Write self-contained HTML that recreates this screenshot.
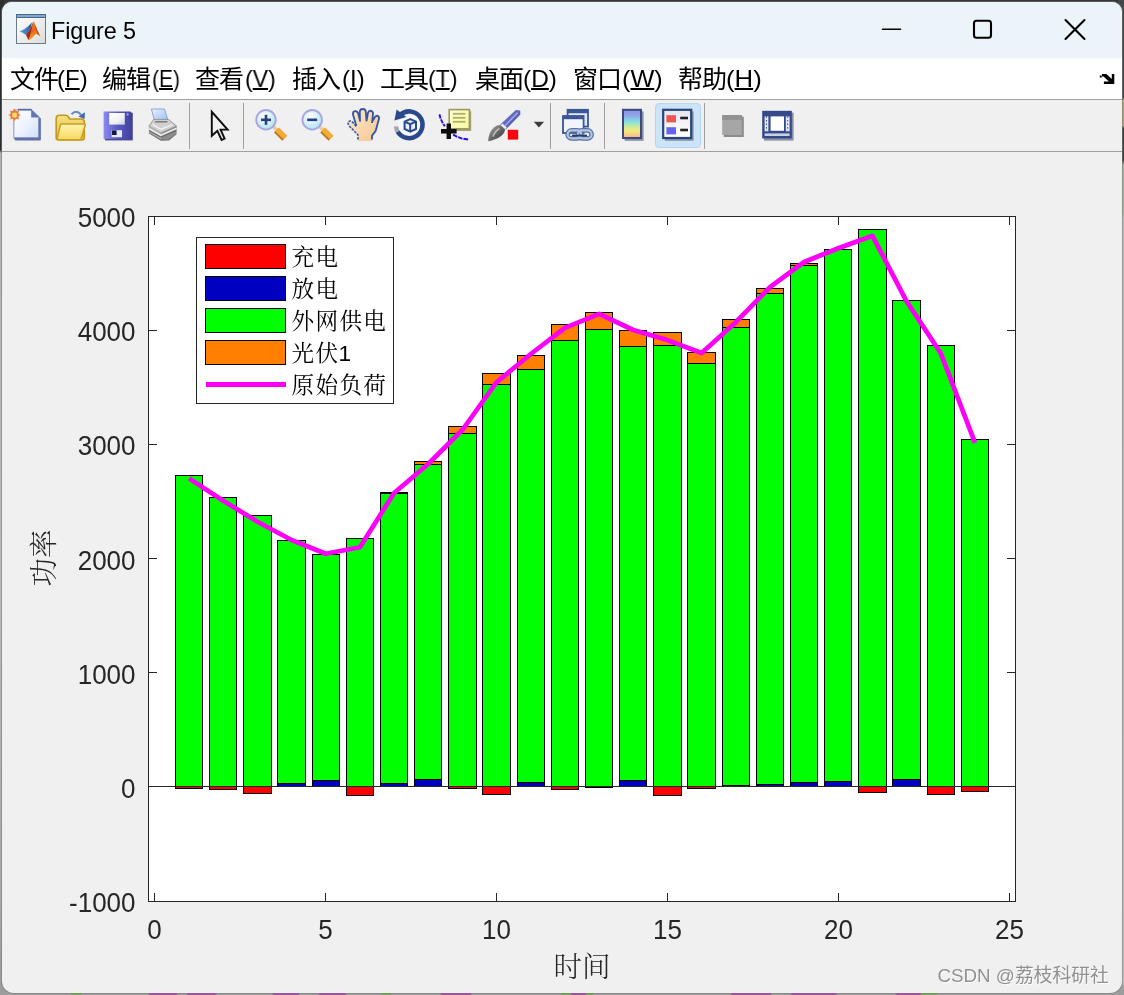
<!DOCTYPE html>
<html lang="zh-CN">
<head>
<meta charset="utf-8">
<title>Figure 5</title>
<style>

html,body{margin:0;padding:0;}
body{width:1124px;height:995px;position:relative;overflow:hidden;background:#34383a;
 font-family:"Liberation Sans","Noto Sans CJK SC",sans-serif;}
#bd-left{position:absolute;left:0;top:0;width:4px;height:995px;
 background:linear-gradient(#2b2f31 0,#2b2f31 150px,#b4b4b4 153px,#bababa 600px,#a8a8a8 900px,#9a9a9a 995px);}
#bd-right{position:absolute;left:1118px;top:0;width:6px;height:995px;
 background:linear-gradient(#44474a 0,#44474a 98px,#b3a36c 100px,#b3a36c 126px,#3d4042 128px,#3d4042 160px,#a4b49c 165px,#a4b49c 214px,#b8b8b8 218px,#bcbcbc 995px);}
#bd-bottom{position:absolute;left:0;top:985px;width:1124px;height:10px;
 background:linear-gradient(90deg,#9d9d9d 0,#9d9d9d 70px,#6fae52 73px,#6fae52 80px,#9d9d9d 83px,#9d9d9d 148px,#a648a8 150px,#a648a8 176px,#9d9d9d 178px,#9d9d9d 186px,#a648a8 188px,#a648a8 215px,#9d9d9d 217px,#9d9d9d 272px,#a648a8 274px,#a648a8 298px,#9d9d9d 300px,#9d9d9d 318px,#a648a8 320px,#a648a8 345px,#9d9d9d 347px,#9d9d9d 380px,#6fae52 382px,#6fae52 390px,#9d9d9d 392px,#9d9d9d 440px,#a648a8 442px,#a648a8 470px,#9d9d9d 472px,#9d9d9d 560px,#6fae52 562px,#6fae52 570px,#a648a8 572px,#a648a8 585px,#6fae52 587px,#6fae52 592px,#9d9d9d 595px,#9d9d9d 730px,#a648a8 732px,#a648a8 770px,#9d9d9d 772px,#9d9d9d 790px,#a648a8 792px,#a648a8 835px,#9d9d9d 838px,#9d9d9d 895px,#a648a8 897px,#a648a8 920px,#6fae52 922px,#6fae52 935px,#9d9d9d 938px,#9d9d9d 1124px);}
#win{position:absolute;left:2px;top:2px;width:1120px;height:991px;background:#f0f0f0;
 border-radius:10px 10px 12px 12px;overflow:hidden;box-shadow:0 0 0 1px rgba(120,120,120,.55);}
#title{position:absolute;left:0;top:0;width:1120px;height:56px;background:#ebf4f8;}
#title .cap{position:absolute;left:48.6px;top:13.5px;font-size:23.4px;line-height:30px;color:#000;letter-spacing:-.1px;white-space:nowrap;will-change:transform;}
#title svg{position:absolute;left:0;top:0;}
#menu{position:absolute;left:0;top:56px;width:1120px;height:41px;background:#fff;border-bottom:1px solid #a0a0a0;}
#menu span{position:absolute;top:5px;font-size:25px;line-height:32px;color:#000;white-space:nowrap;letter-spacing:-1px;will-change:transform;}
#menu span.lat{font-size:24px;letter-spacing:0;transform-origin:0 50%;}
#menu u{text-decoration:underline;text-decoration-thickness:1.5px;text-underline-offset:.5px;}
#tools{position:absolute;left:0;top:98px;width:1120px;height:51px;background:#f0f0f0;border-bottom:1px solid #a0a0a0;}
#tools svg{position:absolute;left:0;top:0;}
#plot{position:absolute;left:0;top:0;will-change:transform;}
#wm{position:absolute;left:0;top:0;will-change:transform;}

</style>
</head>
<body>
<div id="bd-left"></div><div id="bd-right"></div><div id="bd-bottom"></div>
<div id="win">
<div id="title">
<svg width="1120" height="56" viewBox="2 2 1120 56">

<defs>
<linearGradient id="mlbg" x1="0" y1="0" x2="1" y2="1"><stop offset="0" stop-color="#ffffff"/><stop offset="1" stop-color="#dcdcdc"/></linearGradient>
<linearGradient id="mlor" x1="0" y1="0" x2="0.4" y2="1"><stop offset="0" stop-color="#f39a1c"/><stop offset=".55" stop-color="#e8601a"/><stop offset="1" stop-color="#f7b030"/></linearGradient>
<linearGradient id="mlbl" x1="0" y1="0" x2="1" y2="0"><stop offset="0" stop-color="#5aa2dc"/><stop offset=".7" stop-color="#3a70b0"/><stop offset="1" stop-color="#28487c"/></linearGradient>
</defs>
<rect x="16.5" y="14.5" width="29" height="29" fill="url(#mlbg)" stroke="#6c7a88" stroke-width="1"/>
<rect x="16.5" y="14.5" width="29" height="3" fill="#7ba7d6" stroke="#4d6683" stroke-width="1"/>
<path d="M19.6 31.6 Q24.6 29.6 27.6 26.8 Q30.2 24.4 32 22.6 Q31.4 27 29.4 30.4 L26 35 Q22.6 32.6 19.6 31.6 Z" fill="url(#mlbl)"/>
<path d="M26 35 L29.6 30 Q31.8 26 33.2 21.4 L32.4 30 L28.6 40.2 Z" fill="#9c2a1a"/>
<path d="M33.5 21 C35.2 24.5 37.5 31 40.5 36.6 C38.8 35.2 37.4 33.9 36.6 33.9 C34.4 34.4 32.2 39 28.4 40.3 C30.2 35.5 32 28 33.5 21 Z" fill="url(#mlor)"/>
<path d="M33.5 21 C35.2 24.5 37.5 31 40.5 36.6 C39 35.4 38 34.4 37.2 34.1 C36.4 30 35.2 25 33.5 21 Z" fill="#b03c18" opacity=".8"/>

<g stroke="#000" stroke-width="2.1" fill="none" stroke-linecap="round">
<line x1="882.5" y1="29.3" x2="900.5" y2="29.3" stroke-width="1.6"/>
<rect x="974" y="20.7" width="17" height="17" rx="2.5"/>
<path d="M1065.5 20 L1084.5 39 M1084.5 20 L1065.5 39"/>
</g>
</svg>
<div class="cap">Figure 5</div>
</div>
<div id="menu"><span style="left:7.5px">文件</span><span class="lat" style="left:55.2px;transform:scaleX(0.986)">(<u>F</u>)</span><span style="left:99.8px">编辑</span><span class="lat" style="left:149.5px;transform:scaleX(0.876)">(<u>E</u>)</span><span style="left:193.2px">查看</span><span class="lat" style="left:242.5px;transform:scaleX(0.959)">(<u>V</u>)</span><span style="left:290.4px">插入</span><span class="lat" style="left:339.9px;transform:scaleX(0.99)">(<u>I</u>)</span><span style="left:377.5px">工具</span><span class="lat" style="left:426.4px;transform:scaleX(0.96)">(<u>T</u>)</span><span style="left:472.5px">桌面</span><span class="lat" style="left:521.3px;transform:scaleX(1.016)">(<u>D</u>)</span><span style="left:571.4px">窗口</span><span class="lat" style="left:619.8px;transform:scaleX(1.053)">(<u>W</u>)</span><span style="left:676.4px">帮助</span><span class="lat" style="left:724.1px;transform:scaleX(1.072)">(<u>H</u>)</span><svg style="position:absolute;left:0;top:0" width="1120" height="41" viewBox="2 58 1120 41"><path d="M1102 74 h4.4 l5.4 5 v-4.9 h2.5 v10 h-10.4 v-2.6 h5 l-5.4 -5 h-1.5 z M1099.8 75.6 h1.9 v1.9 h-1.9 z" fill="#000"/></svg></div>
<div id="tools">
<svg width="1120" height="51" viewBox="2 100 1120 51">

<defs>
<filter id="soft" x="-10%" y="-10%" width="120%" height="120%"><feGaussianBlur stdDeviation="0.65"/></filter>
<linearGradient id="pg" x1="0" y1="0" x2="1" y2="1"><stop offset="0" stop-color="#ffffff"/><stop offset=".5" stop-color="#eef3ff"/><stop offset="1" stop-color="#cfdcfb"/></linearGradient>
<radialGradient id="sun"><stop offset="0" stop-color="#ffe070"/><stop offset=".45" stop-color="#ffc040"/><stop offset=".7" stop-color="#f07828"/><stop offset="1" stop-color="#e86a28"/></radialGradient>
<linearGradient id="fold" x1="0" y1="0" x2="0" y2="1"><stop offset="0" stop-color="#f8e084"/><stop offset="1" stop-color="#e6ba3c"/></linearGradient>
<linearGradient id="foldf" x1="0" y1="0" x2="0" y2="1"><stop offset="0" stop-color="#fff4b0"/><stop offset="1" stop-color="#f8d860"/></linearGradient>
<linearGradient id="flop" x1="0" y1="0" x2="1" y2="0"><stop offset="0" stop-color="#8a8aee"/><stop offset=".5" stop-color="#5a5ac8"/><stop offset="1" stop-color="#40409a"/></linearGradient>
<linearGradient id="flab" x1="0" y1="0" x2="1" y2="1"><stop offset="0" stop-color="#ffffff"/><stop offset=".6" stop-color="#f0f2f6"/><stop offset="1" stop-color="#c8d0e0"/></linearGradient>
<linearGradient id="prn" x1="0" y1="0" x2="0" y2="1"><stop offset="0" stop-color="#d8d8d8"/><stop offset=".5" stop-color="#f0f0f0"/><stop offset="1" stop-color="#9a9a9a"/></linearGradient>
<linearGradient id="ppr" x1="0" y1="0" x2="1" y2="1"><stop offset="0" stop-color="#e8f0ff"/><stop offset="1" stop-color="#9cc0f4"/></linearGradient>
<radialGradient id="lens" cx=".4" cy=".35" r=".75"><stop offset="0" stop-color="#ffffff"/><stop offset=".5" stop-color="#d6f0f8"/><stop offset="1" stop-color="#a4dcec"/></radialGradient>
<linearGradient id="hand" x1="0" y1="0" x2="1" y2="1"><stop offset="0" stop-color="#fde8cc"/><stop offset="1" stop-color="#f4c890"/></linearGradient>
<linearGradient id="cbar" x1="0" y1="0" x2="0" y2="1"><stop offset="0" stop-color="#8c8ce4"/><stop offset=".2" stop-color="#90a4ec"/><stop offset=".42" stop-color="#84e0e4"/><stop offset=".6" stop-color="#c8ec98"/><stop offset=".75" stop-color="#f4e878"/><stop offset=".9" stop-color="#f8c888"/><stop offset="1" stop-color="#f0b090"/></linearGradient>
<linearGradient id="lgd" x1="0" y1="0" x2="0" y2="1"><stop offset="0" stop-color="#e4e6ee"/><stop offset=".5" stop-color="#f4f4f8"/><stop offset="1" stop-color="#ffffff"/></linearGradient>
<linearGradient id="brh" x1="0" y1="0" x2="1" y2="1"><stop offset="0" stop-color="#8088d8"/><stop offset="1" stop-color="#3c44a0"/></linearGradient>
<linearGradient id="brt" x1="0" y1="0" x2="1" y2="1"><stop offset="0" stop-color="#b0b0b0"/><stop offset=".5" stop-color="#686868"/><stop offset="1" stop-color="#303030"/></linearGradient>
<linearGradient id="note" x1="0" y1="0" x2="1" y2="1"><stop offset="0" stop-color="#ffffd8"/><stop offset="1" stop-color="#f8f8a0"/></linearGradient>
</defs>
<line x1="189.5" y1="103" x2="189.5" y2="149" stroke="#a0a0a0" stroke-width="1" shape-rendering="crispEdges"/><line x1="243.5" y1="103" x2="243.5" y2="149" stroke="#a0a0a0" stroke-width="1" shape-rendering="crispEdges"/><line x1="550.5" y1="103" x2="550.5" y2="149" stroke="#a0a0a0" stroke-width="1" shape-rendering="crispEdges"/><line x1="604.5" y1="103" x2="604.5" y2="149" stroke="#a0a0a0" stroke-width="1" shape-rendering="crispEdges"/><line x1="704.5" y1="103" x2="704.5" y2="149" stroke="#a0a0a0" stroke-width="1" shape-rendering="crispEdges"/>
<g filter="url(#soft)">
<path d="M15.2 111 H32 L40.6 118.6 V140.4 H15.2 Z" fill="#6272a6"/>
<path d="M13.8 109.8 H31.4 L39 117 V138 H13.8 Z" fill="url(#pg)" stroke="#93a4dc" stroke-width="1.2"/>
<path d="M18 109.6 H31.6" stroke="#5a6aa6" stroke-width="1.6"/>
<path d="M31.2 109.4 L39.6 117.6 H31.2 Z" fill="#6474b2"/>
<path d="M14.4 138.6 H39.6 V118" fill="none" stroke="#6272a6" stroke-width="2.2"/>
<g fill="#ea7a3a">
<circle cx="14.6" cy="115" r="4.4"/>
<path d="M14.6 108.6 l1.2 2.8 h-2.4 z M14.6 121.4 l1.2 -2.8 h-2.4 z M8.2 115 l2.8 -1.2 v2.4 z M21 115 l-2.8 -1.2 v2.4 z M10 110.4 l3 1.1 l-1.9 1.9 z M19.2 110.4 l-3 1.1 l1.9 1.9 z M10 119.6 l3 -1.1 l-1.9 -1.9 z M19.2 119.6 l-3 -1.1 l1.9 -1.9 z"/>
</g>
<circle cx="14.6" cy="115" r="2.6" fill="#ffd66a"/>
</g>

<g filter="url(#soft)">
<path d="M56.2 138 V118.5 Q56.2 115.2 59.5 115.2 H65.5 Q67.5 115.2 68.5 117 L69.6 119 H81 Q84.3 119 84.3 122 V138 Q84.3 140 82 140 H58.5 Q56.2 140 56.2 138 Z" fill="url(#fold)" stroke="#c09a1c" stroke-width="1.6"/>
<path d="M61.5 124 H84.6 Q85.6 124 85.2 125.2 L81.2 138.4 Q80.8 139.8 79 139.8 H58.5 Q56.8 139.8 57.3 138.2 L60.3 125.2 Q60.6 124 61.5 124 Z" fill="url(#foldf)" stroke="#c8a020" stroke-width="1.5"/>
<path d="M71.5 114.3 Q76 109 81 114.6" fill="none" stroke="#6a86c2" stroke-width="2"/>
<path d="M85 112.2 L84.6 119 L78.4 116.6 Z" fill="#4466aa"/>
</g>

<g filter="url(#soft)">
<path d="M105 112.8 H132.8 V140.4 H105 Z" fill="#46468a"/>
<path d="M103.6 111.4 H130.2 L131.6 112.8 V139 H103.6 Z" fill="url(#flop)"/>
<rect x="109.2" y="113" width="15.6" height="11.6" fill="url(#flab)"/>
<rect x="111.6" y="130.2" width="10.4" height="7" fill="#e6eaf4"/>
<rect x="112" y="130.4" width="4.6" height="4.6" fill="#16163a"/>
<rect x="126.6" y="113.2" width="2" height="2.4" fill="#9a9af0"/>
</g>

<g filter="url(#soft)">
<path d="M151.4 109 H164.6 L167.8 119.8 H154.2 Z" fill="url(#ppr)" stroke="#8c9cd0" stroke-width=".9"/>
<path d="M153.6 119.4 H168.4 L176.6 126 L161 133 L148.8 126.2 Z" fill="#cfcfcf" stroke="#8a8a8a" stroke-width=".8"/>
<path d="M148.8 126.2 L161 133 V140.2 L148.8 132.6 Z" fill="#b4b4b4"/>
<path d="M161 133 L176.6 126 V133.2 L168.8 139.8 L161 140.2 Z" fill="#8e8e8e"/>
<path d="M155 121.8 H167.4" stroke="#6e6e6e" stroke-width="1.3"/>
<path d="M152.4 124.4 L161 129.2 L172.4 124.6" fill="none" stroke="#f2f2f2" stroke-width="1.3"/>
<path d="M149 128.6 L161 135.2 L176.4 128.4" fill="none" stroke="#f6f6f6" stroke-width="1.3"/>
<path d="M149 130.6 L161 137.2 L176.4 130.6" fill="none" stroke="#686868" stroke-width="1.1"/>
<path d="M149 132.8 L161 140 L168.8 139.8 L176.4 133.4" fill="none" stroke="#787878" stroke-width="1.3"/>
</g>

<g filter="url(#soft)">
<path d="M211.8 111.8 V135.8 L217.4 130.8 L221.6 140 L224.6 138.6 L220.6 129.6 H227.6 Z" fill="#f2f2f2" stroke="#0a0a0a" stroke-width="1.9" stroke-linejoin="miter"/>
</g>

<g filter="url(#soft)">
<line x1="272.6" y1="126" x2="278" y2="131" stroke="#e8d0a0" stroke-width="3.4"/>
<line x1="276.2" y1="130.2" x2="284.6" y2="138.4" stroke="#b87c1c" stroke-width="6.4" stroke-linecap="butt"/>
<line x1="277" y1="129.4" x2="285.4" y2="137.4" stroke="#f6aa38" stroke-width="5.2" stroke-linecap="butt"/>
<circle cx="266" cy="119.8" r="9.8" fill="url(#lens)" stroke="#a8a6e0" stroke-width="1.8"/>
<line x1="261" y1="119.8" x2="271" y2="119.8" stroke="#24407c" stroke-width="2.6"/>
<line x1="266" y1="114.8" x2="266" y2="124.8" stroke="#24407c" stroke-width="2.6"/>
</g>

<g filter="url(#soft)">
<line x1="318.8" y1="126" x2="324.2" y2="131" stroke="#e8d0a0" stroke-width="3.4"/>
<line x1="322.4" y1="130.2" x2="330.8" y2="138.4" stroke="#b87c1c" stroke-width="6.4" stroke-linecap="butt"/>
<line x1="323.2" y1="129.4" x2="331.59999999999997" y2="137.4" stroke="#f6aa38" stroke-width="5.2" stroke-linecap="butt"/>
<circle cx="312.2" cy="119.8" r="9.8" fill="url(#lens)" stroke="#a8a6e0" stroke-width="1.8"/>
<line x1="307.2" y1="119.8" x2="317.2" y2="119.8" stroke="#24407c" stroke-width="2.6"/>
</g>

<g filter="url(#soft)">
<path d="M358 141 V135 L350.2 127 Q347 123.6 348.6 121.6 Q350.6 120 353 122.6 L356 125.8 L353 114.6 Q352.6 111.6 355 111.2 Q357.4 111 358.2 113.6 L360 119.6 L359.8 111.6 Q360.2 109 362.8 109 Q365.4 109 365.8 111.6 L366.6 119.6 L368 112.8 Q368.8 110.4 371 110.8 Q373.2 111.4 373 113.8 L372.2 121 L375 117 Q376.4 115.2 378 116 Q379.6 117 378.8 119.4 L375.6 131 L372 135.6 V141 Z" fill="url(#hand)"/>
<path d="M358 139.4 V135 L350.2 127 Q347 123.6 348.6 121.6 Q350.6 120 353 122.6 L356.6 126.6" fill="none" stroke="#3a58a6" stroke-width="1.7" stroke-dasharray="2.4 1.2"/>
<path d="M356.4 126 L353 114.6 Q352.6 111.6 355 111.2 Q357.4 111 358.2 113.6 L360.2 121.6 M360 121 L359.8 111.6 Q360.2 109 362.8 109 Q365.4 109 365.8 111.6 L366.6 121.4 M366.6 120.6 L368 112.8 Q368.8 110.4 371 110.8 Q373.2 111.4 373 113.8 L372 123 M372.2 121.6 L375 117 Q376.4 115.2 378 116 Q379.6 117 378.8 119.4 L375.6 131 L372 135.6 V139.4" fill="none" stroke="#3454a4" stroke-width="1.8"/>
</g>

<g filter="url(#soft)">
<circle cx="409.4" cy="125" r="11.4" fill="#f6f7fb"/>
<path d="M400.4 114.6 A13.4 13.4 0 1 1 397.6 131.6" fill="none" stroke="#2c4a8c" stroke-width="4.6"/>
<path d="M397.6 131.6 A13.4 13.4 0 0 1 396 126.4" fill="none" stroke="#a2a8b4" stroke-width="4.4"/>
<path d="M394.4 120.6 L396.6 109.4 L406.4 117 Z" fill="#2c4a8c"/>
<path d="M404.6 121.6 L410.2 119.2 L416 121.6 V129 L410.2 131.6 L404.6 129 Z" fill="#e8eefa" stroke="#2c4a8c" stroke-width="2"/>
<path d="M404.6 121.6 L410.2 124.2 L416 121.6 M410.2 124.2 V131.6" fill="none" stroke="#2c4a8c" stroke-width="2"/>
</g>

<g filter="url(#soft)">
<rect x="450.8" y="111.2" width="20.4" height="19.8" fill="#a4a47c"/>
<rect x="449.2" y="109.6" width="20.2" height="19.2" fill="url(#note)" stroke="#9a9a58" stroke-width="1.6"/>
<g stroke="#b2b266" stroke-width="1.9"><line x1="452.8" y1="113.8" x2="465.4" y2="113.8"/><line x1="452.8" y1="117.8" x2="465.4" y2="117.8"/><line x1="452.8" y1="121.8" x2="465.4" y2="121.8"/></g>
<path d="M439.4 114.4 L440.8 119 L442.6 122.8 L444.8 126.2" fill="none" stroke="#2408e0" stroke-width="1.9" stroke-dasharray="4.2 1"/>
<path d="M453.2 134.6 L457.6 137 L462 138.6 L469 139.6" fill="none" stroke="#2408e0" stroke-width="1.9" stroke-dasharray="4.6 1"/>
<path d="M448.8 123.4 V139 M441 131.2 H456.6" stroke="#080808" stroke-width="4.4" fill="none"/>
</g>

<g filter="url(#soft)">
<path d="M515.8 110 L520.2 110.4 L520.4 114.6 L505.8 129.6 L500.2 124.6 Z" fill="url(#brh)"/>
<path d="M517.6 112.8 L505 125.8" stroke="#a4acec" stroke-width="1.5"/>
<path d="M501.6 124.4 L506 128.4" stroke="#eef0ff" stroke-width="2.4"/>
<path d="M500.4 125 L505.2 129.4 Q503.4 138 488.2 141.2 Q488.4 132 494.4 127 Q497.2 124.8 500.4 125 Z" fill="url(#brt)"/>
<path d="M493 136.6 Q494.6 131.6 499.4 128.4" fill="none" stroke="#bcbcbc" stroke-width="1.6"/>
<rect x="507.8" y="129.8" width="10.4" height="9.8" fill="#ff0010"/>
</g>
<path d="M533.8 121.8 H544 L538.9 127.6 Z" fill="#3c3c3c" filter="url(#soft)"/>
<g filter="url(#soft)">
<rect x="567.6" y="109.8" width="20.4" height="16.8" fill="#dfe8fb" stroke="#3a5596" stroke-width="1.8"/>
<rect x="567.6" y="109.8" width="20.4" height="3.4" fill="#3a5596"/>
<rect x="563" y="116" width="20.6" height="17" fill="#f2f5fc" stroke="#3a5596" stroke-width="1.8"/>
<rect x="563" y="116" width="20.6" height="3.2" fill="#3a5596"/>
<g fill="none" stroke="#5870a0" stroke-width="4.6"><rect x="567.6" y="130.4" width="13.6" height="8" rx="4"/><rect x="578" y="130.4" width="13.6" height="8" rx="4"/></g>
<g fill="none" stroke="#b4c6e6" stroke-width="2.2"><rect x="567.6" y="130.4" width="13.6" height="8" rx="4"/><rect x="578" y="130.4" width="13.6" height="8" rx="4"/></g>
<path d="M572 135.6 H587" stroke="#2c3c68" stroke-width="2"/>
</g>

<g filter="url(#soft)">
<rect x="624.6" y="111.4" width="19" height="29.4" fill="#8a8fa8"/>
<rect x="623" y="109.8" width="18" height="28.2" fill="url(#cbar)" stroke="#3c4a80" stroke-width="2"/>
</g>

<rect x="655.5" y="103.5" width="45" height="44" rx="3.5" fill="#cce4f7" stroke="#b4d6f2" stroke-width="1"/>
<g filter="url(#soft)">
<rect x="664.8" y="111.4" width="28.8" height="29.4" fill="#8a93ab"/>
<rect x="663.2" y="109.8" width="28" height="28.2" fill="url(#lgd)" stroke="#2c4478" stroke-width="2.2"/>
<rect x="666.4" y="115.2" width="9.6" height="7.2" fill="#f05454"/>
<rect x="666.4" y="127.2" width="9.6" height="7.2" fill="#6464f0"/>
<line x1="680.2" y1="118" x2="688" y2="118" stroke="#202020" stroke-width="2.6"/>
<line x1="680.2" y1="130" x2="688" y2="130" stroke="#202020" stroke-width="2.6"/>
</g>

<g filter="url(#soft)">
<rect x="723.8" y="116.6" width="20" height="20.4" fill="#8c8c8c"/>
<rect x="722.2" y="115" width="19.6" height="20" fill="#a6a6a6"/>
<rect x="722.2" y="115" width="19.6" height="5" fill="#929292"/>
</g>

<g filter="url(#soft)">
<rect x="764" y="112.6" width="29.6" height="28" fill="#8a8fa4"/>
<rect x="762.2" y="110.8" width="29.6" height="27.6" fill="#34488a"/>
<rect x="764.6" y="116.4" width="3.8" height="15" fill="#e2e8f6"/>
<rect x="785.8" y="116.4" width="3.8" height="15" fill="#e2e8f6"/>
<rect x="770.6" y="116.4" width="13.4" height="14.4" fill="#ffffff"/>
<rect x="764.6" y="133.4" width="25" height="2.6" fill="#c8d0e4"/>
<g stroke="#34488a" stroke-width="1" stroke-dasharray="1.4 2.2"><line x1="766.5" y1="116.4" x2="766.5" y2="131.4"/><line x1="787.7" y1="116.4" x2="787.7" y2="131.4"/></g>
</g>

</svg>
</div>
</div>
<svg id="plot" width="1124" height="995" viewBox="0 0 1124 995">
<rect x="148.5" y="216.5" width="867.0" height="685.0" fill="#fff"/>
<g shape-rendering="crispEdges" stroke="#000" stroke-width="1">
<rect x="175.5" y="786.5" width="27.0" height="2.0" fill="#ff0000"/>
<rect x="175.5" y="475.5" width="27.0" height="311.0" fill="#00ff00"/>
<rect x="209.5" y="786.5" width="27.0" height="3.0" fill="#ff0000"/>
<rect x="209.5" y="497.5" width="27.0" height="289.0" fill="#00ff00"/>
<rect x="243.5" y="786.5" width="28.0" height="7.0" fill="#ff0000"/>
<rect x="243.5" y="515.5" width="28.0" height="271.0" fill="#00ff00"/>
<rect x="277.5" y="783.5" width="28.0" height="3.0" fill="#0000c0"/>
<rect x="277.5" y="540.5" width="28.0" height="243.0" fill="#00ff00"/>
<rect x="312.5" y="780.5" width="27.0" height="6.0" fill="#0000c0"/>
<rect x="312.5" y="554.5" width="27.0" height="226.0" fill="#00ff00"/>
<rect x="346.5" y="786.5" width="27.0" height="9.0" fill="#ff0000"/>
<rect x="346.5" y="538.5" width="27.0" height="248.0" fill="#00ff00"/>
<rect x="380.5" y="783.5" width="27.0" height="3.0" fill="#0000c0"/>
<rect x="380.5" y="493.5" width="27.0" height="290.0" fill="#00ff00"/>
<rect x="380.5" y="492.5" width="27.0" height="1.0" fill="#ff8000"/>
<rect x="414.5" y="779.5" width="27.0" height="7.0" fill="#0000c0"/>
<rect x="414.5" y="464.5" width="27.0" height="315.0" fill="#00ff00"/>
<rect x="414.5" y="461.5" width="27.0" height="3.0" fill="#ff8000"/>
<rect x="448.5" y="786.5" width="28.0" height="2.0" fill="#ff0000"/>
<rect x="448.5" y="433.5" width="28.0" height="353.0" fill="#00ff00"/>
<rect x="448.5" y="426.5" width="28.0" height="7.0" fill="#ff8000"/>
<rect x="482.5" y="786.5" width="28.0" height="8.0" fill="#ff0000"/>
<rect x="482.5" y="384.5" width="28.0" height="402.0" fill="#00ff00"/>
<rect x="482.5" y="373.5" width="28.0" height="11.0" fill="#ff8000"/>
<rect x="517.5" y="782.5" width="27.0" height="4.0" fill="#0000c0"/>
<rect x="517.5" y="369.5" width="27.0" height="413.0" fill="#00ff00"/>
<rect x="517.5" y="355.5" width="27.0" height="14.0" fill="#ff8000"/>
<rect x="551.5" y="786.5" width="27.0" height="3.0" fill="#ff0000"/>
<rect x="551.5" y="340.5" width="27.0" height="446.0" fill="#00ff00"/>
<rect x="551.5" y="324.5" width="27.0" height="16.0" fill="#ff8000"/>
<rect x="585.5" y="786.5" width="27.0" height="1.0" fill="#ff0000"/>
<rect x="585.5" y="329.5" width="27.0" height="457.0" fill="#00ff00"/>
<rect x="585.5" y="312.5" width="27.0" height="17.0" fill="#ff8000"/>
<rect x="619.5" y="780.5" width="27.0" height="6.0" fill="#0000c0"/>
<rect x="619.5" y="346.5" width="27.0" height="434.0" fill="#00ff00"/>
<rect x="619.5" y="330.5" width="27.0" height="16.0" fill="#ff8000"/>
<rect x="653.5" y="786.5" width="28.0" height="9.0" fill="#ff0000"/>
<rect x="653.5" y="345.5" width="28.0" height="441.0" fill="#00ff00"/>
<rect x="653.5" y="332.5" width="28.0" height="13.0" fill="#ff8000"/>
<rect x="687.5" y="786.5" width="28.0" height="2.0" fill="#ff0000"/>
<rect x="687.5" y="363.5" width="28.0" height="423.0" fill="#00ff00"/>
<rect x="687.5" y="352.5" width="28.0" height="11.0" fill="#ff8000"/>
<rect x="722.5" y="785.5" width="27.0" height="1.0" fill="#0000c0"/>
<rect x="722.5" y="327.5" width="27.0" height="458.0" fill="#00ff00"/>
<rect x="722.5" y="319.5" width="27.0" height="8.0" fill="#ff8000"/>
<rect x="756.5" y="784.5" width="27.0" height="2.0" fill="#0000c0"/>
<rect x="756.5" y="293.5" width="27.0" height="491.0" fill="#00ff00"/>
<rect x="756.5" y="288.5" width="27.0" height="5.0" fill="#ff8000"/>
<rect x="790.5" y="782.5" width="27.0" height="4.0" fill="#0000c0"/>
<rect x="790.5" y="265.5" width="27.0" height="517.0" fill="#00ff00"/>
<rect x="790.5" y="263.5" width="27.0" height="2.0" fill="#ff8000"/>
<rect x="824.5" y="781.5" width="27.0" height="5.0" fill="#0000c0"/>
<rect x="824.5" y="249.5" width="27.0" height="532.0" fill="#00ff00"/>
<rect x="858.5" y="786.5" width="28.0" height="6.0" fill="#ff0000"/>
<rect x="858.5" y="229.5" width="28.0" height="557.0" fill="#00ff00"/>
<rect x="892.5" y="779.5" width="28.0" height="7.0" fill="#0000c0"/>
<rect x="892.5" y="300.5" width="28.0" height="479.0" fill="#00ff00"/>
<rect x="927.5" y="786.5" width="27.0" height="8.0" fill="#ff0000"/>
<rect x="927.5" y="345.5" width="27.0" height="441.0" fill="#00ff00"/>
<rect x="961.5" y="786.5" width="27.0" height="5.0" fill="#ff0000"/>
<rect x="961.5" y="439.5" width="27.0" height="347.0" fill="#00ff00"/>
</g>
<g shape-rendering="crispEdges" stroke="#262626" stroke-width="1" fill="none">
<line x1="148.5" y1="786.5" x2="1015.5" y2="786.5"/>
<rect x="148.5" y="216.5" width="867.0" height="685.0"/>
<line x1="154.5" y1="901.5" x2="154.5" y2="893.0"/>
<line x1="154.5" y1="216.5" x2="154.5" y2="225.0"/>
<line x1="325.5" y1="901.5" x2="325.5" y2="893.0"/>
<line x1="325.5" y1="216.5" x2="325.5" y2="225.0"/>
<line x1="496.5" y1="901.5" x2="496.5" y2="893.0"/>
<line x1="496.5" y1="216.5" x2="496.5" y2="225.0"/>
<line x1="667.5" y1="901.5" x2="667.5" y2="893.0"/>
<line x1="667.5" y1="216.5" x2="667.5" y2="225.0"/>
<line x1="838.5" y1="901.5" x2="838.5" y2="893.0"/>
<line x1="838.5" y1="216.5" x2="838.5" y2="225.0"/>
<line x1="1009.5000000000001" y1="901.5" x2="1009.5000000000001" y2="893.0"/>
<line x1="1009.5000000000001" y1="216.5" x2="1009.5000000000001" y2="225.0"/>
<line x1="148.5" y1="786.5" x2="157.0" y2="786.5"/>
<line x1="1015.5" y1="786.5" x2="1007.0" y2="786.5"/>
<line x1="148.5" y1="672.5" x2="157.0" y2="672.5"/>
<line x1="1015.5" y1="672.5" x2="1007.0" y2="672.5"/>
<line x1="148.5" y1="558.5" x2="157.0" y2="558.5"/>
<line x1="1015.5" y1="558.5" x2="1007.0" y2="558.5"/>
<line x1="148.5" y1="444.5" x2="157.0" y2="444.5"/>
<line x1="1015.5" y1="444.5" x2="1007.0" y2="444.5"/>
<line x1="148.5" y1="330.5" x2="157.0" y2="330.5"/>
<line x1="1015.5" y1="330.5" x2="1007.0" y2="330.5"/>
</g>
<polyline points="189.1,478.4 223.2,500.8 257.4,521.7 291.6,540.0 325.7,553.7 359.9,547.2 394.1,493.0 428.2,464.0 462.4,430.0 496.6,382.2 530.8,354.0 564.9,327.9 599.1,313.9 633.3,330.0 667.4,340.1 701.6,353.0 735.8,322.2 770.0,287.2 804.1,262.0 838.3,248.3 872.5,235.8 906.6,301.4 940.8,353.3 975.0,442.8" fill="none" stroke="#fa00f6" stroke-width="4.7" stroke-linejoin="round" stroke-linecap="butt"/>
<g font-family="'Liberation Sans', sans-serif" font-size="26" fill="#262626">
<text transform="translate(154.5,939.1) scale(1,1.07)" text-anchor="middle">0</text>
<text transform="translate(325.5,939.1) scale(1,1.07)" text-anchor="middle">5</text>
<text transform="translate(496.5,939.1) scale(1,1.07)" text-anchor="middle">10</text>
<text transform="translate(667.5,939.1) scale(1,1.07)" text-anchor="middle">15</text>
<text transform="translate(838.5,939.1) scale(1,1.07)" text-anchor="middle">20</text>
<text transform="translate(1009.5,939.1) scale(1,1.07)" text-anchor="middle">25</text>
<text transform="translate(135.5,911.8) scale(1,1.07)" text-anchor="end">-1000</text>
<text transform="translate(135.5,797.7) scale(1,1.07)" text-anchor="end">0</text>
<text transform="translate(135.5,683.6) scale(1,1.07)" text-anchor="end">1000</text>
<text transform="translate(135.5,569.5) scale(1,1.07)" text-anchor="end">2000</text>
<text transform="translate(135.5,455.4) scale(1,1.07)" text-anchor="end">3000</text>
<text transform="translate(135.5,341.3) scale(1,1.07)" text-anchor="end">4000</text>
<text transform="translate(135.5,227.2) scale(1,1.07)" text-anchor="end">5000</text>
</g>
<g font-family="'Liberation Serif', 'Noto Serif CJK SC', serif" font-size="28.5" font-weight="300" fill="#262626">
<text x="582" y="977" text-anchor="middle">时间</text>
<text transform="translate(53.8,558) rotate(-90)" text-anchor="middle">功率</text>
</g>
<g shape-rendering="crispEdges">
<rect x="196.5" y="237.5" width="197" height="166" fill="#fff" stroke="#262626" stroke-width="1"/>
<rect x="205.5" y="244.5" width="80" height="24" fill="#ff0000" stroke="#000" stroke-width="1"/>
<rect x="205.5" y="276.5" width="80" height="24" fill="#0000c0" stroke="#000" stroke-width="1"/>
<rect x="205.5" y="308.5" width="80" height="24" fill="#00ff00" stroke="#000" stroke-width="1"/>
<rect x="205.5" y="340.5" width="80" height="24" fill="#ff8000" stroke="#000" stroke-width="1"/>
<line x1="206" y1="384.5" x2="286" y2="384.5" stroke="#fa00f6" stroke-width="4.8"/>
</g>
<g font-family="'Liberation Serif', 'Noto Serif CJK SC', serif" font-size="22.6" font-weight="400" letter-spacing="1.3" fill="#000">
<text x="291.6" y="265.2">充电</text>
<text x="291.6" y="297.2">放电</text>
<text x="291.6" y="329.2">外网供电</text>
<text x="291.6" y="361.2">光伏<tspan dx="-0.8" font-family="'Liberation Sans', sans-serif" font-weight="400">1</tspan></text>
<text x="291.6" y="393.2">原始负荷</text>
</g>
</svg>
<svg id="wm" width="1124" height="995" viewBox="0 0 1124 995">
<g font-family="'Liberation Sans','Noto Sans CJK SC',sans-serif" font-size="18.8">
<text x="938.2" y="983.2" fill="#ffffff" opacity=".95">CSDN @荔枝科研社</text>
<text x="937.4" y="982.4" fill="#909090">CSDN @荔枝科研社</text>
</g></svg>
</body>
</html>
